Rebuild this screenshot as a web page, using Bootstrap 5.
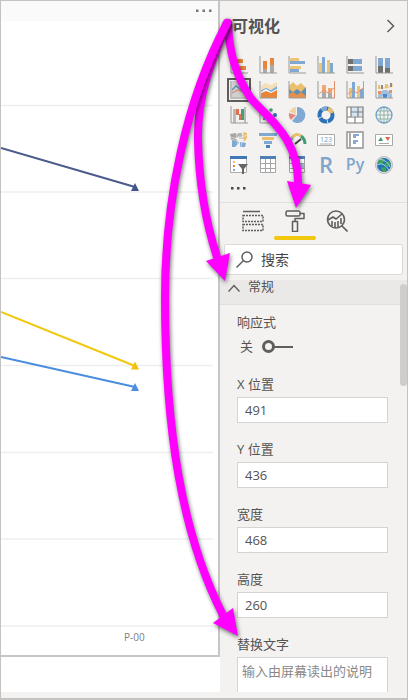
<!DOCTYPE html>
<html lang="zh-CN">
<head>
<meta charset="utf-8">
<meta name="viewport" content="width=device-width, initial-scale=1">
<title>可视化</title>
<link href="https://cdn.jsdelivr.net/npm/bootstrap@5.3.0/dist/css/bootstrap.min.css" rel="stylesheet">
<style>
body{font-family:"Open Sans","Noto Sans CJK SC",sans-serif;font-size:13px;line-height:18px;color:#555352;background:#f3f2f1}
.app{border:1px solid #c3c2c1;border-bottom-width:2px;padding-bottom:6px}
.canvas{background:#fff;min-width:0}
.visual{border-right:2px solid #c8c6c4;border-bottom:2px solid #c8c6c4}
.visual-head{background:#fafafa;height:20px;padding:0 6px}
.chart{height:634px}
.pane{width:187px;flex:none}
.pane-title{font-size:16px;line-height:24px;font-weight:700;color:#555352}
.pane-head{padding:13px 12px 18px 12px}
.plain{border:0;background:none;padding:0;color:inherit}
.viz{display:grid;grid-template-columns:repeat(6,18px);gap:7px 11px;padding-left:10px}
.viz button,.viz svg{width:18px;height:18px;display:block}
.viz svg{overflow:visible}
.viz .chosen{background:#d2d0ce;outline:2px solid #605e5c;outline-offset:1px}
.more{height:28px;padding:0 0 0 10px}
.tabs{border-top:1px solid #e1dfdd;padding-left:12px}
.tabs button{width:42px;padding:7px 0 4px;border-bottom:4px solid transparent}
.tabs .on{border-bottom:0}
.tabs .on::after{content:"";display:block;height:4px;border-radius:2px;background:#f2c80f;margin-top:4px;margin-bottom:-4px}
.find{margin:4px 4px 5px;height:31px;background:#fff;border:1px solid #dddbd9;border-radius:2px;padding:0 11px}
.find input{font-size:14px;color:#484644;min-width:0}
.find input::placeholder{color:#484644;opacity:1}
.props{background:#f3f2f1;position:relative}
.sect{background:#ebe9e8;border:0;border-bottom:1px solid #e1dfdd;color:#555352;line-height:12px;padding:0 8px 12px}
.fields{padding:8px 19px 0 17px;gap:17px}
.box{height:26px;border:1px solid #d6d4d2;background:#fff;font-size:13px;color:#555352;padding:0 7px;width:100%}
.note{height:35px;border:1px solid #d6d4d2;border-bottom:0;background:#fff;font-size:13px;padding:4px 4px;width:100%;resize:none;overflow:hidden;display:block}
.note::placeholder{color:#8a8886;opacity:1}
.field-label{display:block;margin-bottom:4px}
.switch-row{padding-left:3px;margin-top:6px;margin-bottom:3px;gap:9px}
.switch{appearance:none;width:31px;height:13px;margin:0;background:linear-gradient(#605e5c,#605e5c) 12px 6px/20px 2px no-repeat}
.switch::before{content:"";display:block;width:13px;height:13px;border:3px solid #605e5c;border-radius:50%}
.bar{position:absolute;right:0;top:4px;width:7px;height:102px;border-radius:4px;background:#cfcdcc}
.arrows{position:absolute;left:0;top:0;pointer-events:none}
.arrows g{filter:drop-shadow(1px 2px 2px rgba(0,0,0,.55))}
</style>
<script src="https://cdn.jsdelivr.net/npm/bootstrap@5.3.0/dist/js/bootstrap.bundle.min.js"></script>
</head>
<body>
<div class="app d-flex min-vh-100 position-relative">
  <main class="canvas flex-grow-1">
    <section class="visual">
      <div class="visual-head d-flex justify-content-end align-items-center">
        <button class="plain d-flex" aria-label="更多选项"><svg width="16" height="4" fill="#777"><path d="M0 .5h2.500v2.500H0zM6.500 .5h2.500v2.500H6.500zM13 .5h2.500v2.500H13z"/></svg></button>
      </div>
      <svg class="chart d-block w-100" viewBox="1 21 217 634" preserveAspectRatio="xMaxYMin slice">
        <path d="M1 105.500H213M1 192H213M1 278.500H213M1 365.500H213M1 452.500H213M1 539H213M1 626H213" stroke="#eeeeee" stroke-width="1.300" fill="none"/>
        <g fill="none" stroke-width="2"><path stroke="#4a5b8c" d="M1 148L135 187"/><path stroke="#f2c80f" d="M1 312L135 366"/><path stroke="#4a8ddc" d="M1 357L135 387"/></g>
        <path fill="#41558a" d="M131 191l4-8 4 8z"/><path fill="#efc20c" d="M131 369.500l4-8 4 8z"/><path fill="#4a8ddc" d="M131 391l4-8 4 8z"/>
        <text x="124" y="641" font-size="10" fill="#808080">P-00</text>
      </svg>
    </section>
  </main>

  <aside class="pane d-flex flex-column">
    <header class="pane-head d-flex justify-content-between align-items-center">
      <h1 class="pane-title m-0">可视化</h1>
      <button class="plain d-flex" aria-label="折叠"><svg width="9" height="14" fill="none" stroke="#605e5c" stroke-width="1.500"><path d="M1.500 1l6 6-6 6"/></svg></button>
    </header>

    <div class="viz">
      <button class="plain" aria-label="堆积条形图"><svg viewBox="0 0 18 18"><path fill="#e8853a" d="M2 3h11v4H2zM2 10h14v4H2z"/><path fill="#aaa" d="M2 3h4v4H2zM2 10h6v4H2z"/><path d="M1 0v17h17" fill="none" stroke="#999"/></svg></button>
      <button class="plain" aria-label="堆积柱形图"><svg viewBox="0 0 18 18"><path fill="#e8853a" d="M4 5h4v8H4zM11 2h4v7h-4z"/><path fill="#aaa" d="M4 13h4v4H4zM11 9h4v8h-4z"/><path d="M1 0v17h17" fill="none" stroke="#999"/></svg></button>
      <button class="plain" aria-label="簇状条形图"><svg viewBox="0 0 18 18"><path fill="#ebc477" d="M2 2h9v3H2zM2 10h11v3H2z"/><path fill="#7fa9d3" d="M2 5h15v3H2zM2 13h9v3H2z"/><path d="M1 0v17h17" fill="none" stroke="#999"/></svg></button>
      <button class="plain" aria-label="簇状柱形图"><svg viewBox="0 0 18 18"><path fill="#ebc477" d="M2 7h3v10H2zM10 4h3v13h-3z"/><path fill="#7fa9d3" d="M5 1h3v16H5zM13 7h3v10h-3z"/><path d="M1 0v17h17" fill="none" stroke="#999"/></svg></button>
      <button class="plain" aria-label="百分比条形图"><svg viewBox="0 0 18 18"><path fill="#7fa9d3" d="M6 3h10v5H6zM6 10h10v5H6z"/><path fill="#707070" d="M2 3h5v5H2zM2 10h5v5H2z"/><path d="M1 0v17h17" fill="none" stroke="#999"/></svg></button>
      <button class="plain" aria-label="百分比柱形图"><svg viewBox="0 0 18 18"><path fill="#7fa9d3" d="M3 2h5v9H3zM10 2h5v10h-5z"/><path fill="#707070" d="M3 10h5v7H3zM10 12h5v5h-5z"/><path d="M1 0v17h17" fill="none" stroke="#999"/></svg></button>

      <button class="plain chosen" aria-label="折线图"><svg viewBox="0 0 18 18" fill="none"><path d="M1 0v17h17" stroke="#aaa"/><path stroke="#d98a70" stroke-width="1.200" d="M2 12l6-3 5 2 5-5"/><path stroke="#5f8fc1" stroke-width="1.400" d="M2 9l4-4 7 5 5 1"/></svg></button>
      <button class="plain" aria-label="分区图"><svg viewBox="0 0 18 18"><path fill="#f6dfb8" d="M2 5l4-3 6 2 6-3v7H2z"/><path fill="#7fb1d4" d="M2 9l5-2 5 2 6-4v6H2z"/><path fill="#fff" d="M2 11l5-3 5 3 6-3v4H2z"/><path fill="#e8853a" d="M2 12l5-2 5 2 6-3v8H2z"/><path d="M1 0v17h17" fill="none" stroke="#999"/></svg></button>
      <button class="plain" aria-label="堆积面积图"><svg viewBox="0 0 18 18"><path fill="#ebbf6b" d="M1 5l4-4 4 4 4-3 5 5v8H1z"/><path fill="#5f8fb8" d="M1 8l4 3 4-3 4 3 5-5v11H1z"/><path fill="#e8904a" d="M1 13l4-2 4 3 4-3 5 4v2H1z"/><path d="M1 0v17h17" fill="none" stroke="#999"/></svg></button>
      <button class="plain" aria-label="折线和堆积柱形图"><svg viewBox="0 0 18 18"><path fill="#eda875" d="M5 4h4v7H5zM11 7h4v5h-4z"/><path fill="#aaa" d="M5 11h4v6H5zM11 12h4v5h-4z"/><path d="M1 0v17h17" fill="none" stroke="#999"/><path d="M17.500 0v17M2 13l5-4 4 3 6-5" fill="none" stroke="#e89068"/></svg></button>
      <button class="plain" aria-label="折线和簇状柱形图"><svg viewBox="0 0 18 18"><path fill="#ebc477" d="M3 7h3v10H3zM11 5h3v12h-3z"/><path fill="#7fa9d3" d="M6 1h3v16H6zM14 8h3v9h-3z"/><path d="M1 0v17h17" fill="none" stroke="#999"/><path d="M17.500 0v17M2 13l5-4 4 3 6-5" fill="none" stroke="#e89068"/></svg></button>
      <button class="plain" aria-label="功能区图表"><svg viewBox="0 0 18 18"><path fill="#f4dcb0" d="M3 5q7 3 15-3v4Q9 9 3 8z"/><path fill="#7fa9d3" opacity=".7" d="M3 13l5-4h4l5 4v4h-3l-4-4-4 4H3z"/><path fill="#8c8c8c" d="M6 4h2v4H6zM15 2h2v4h-2z"/><path fill="#ebbf6b" d="M3 4h2v4H3zM10 3h3v4h-3z"/><path fill="#e89068" d="M3 10h3v3H3zM14 9h3v3h-3z"/><path fill="#4d8ac5" d="M8 13h4v4H8z"/><path d="M1 0v17h17" fill="none" stroke="#999"/></svg></button>

      <button class="plain" aria-label="瀑布图"><svg viewBox="0 0 18 18"><path fill="#bbb" d="M3 3h3v14H3zM14 1h2v16h-2z"/><path fill="#e27352" d="M6 3h3v6H6zM9 8h2v6H9z"/><path fill="#4b9b7a" d="M11 3h3v11h-3z"/><path d="M1 0v17h17" fill="none" stroke="#999"/></svg></button>
      <button class="plain" aria-label="散点图"><svg viewBox="0 0 18 18"><g fill="#2f72b8"><circle cx="5" cy="8" r="2"/><circle cx="16" cy="9" r="2"/><circle cx="5" cy="13" r="1"/></g><g fill="#449a72"><circle cx="12" cy="4" r="1.800"/><circle cx="9" cy="11" r="2"/></g><path d="M1 0v17h17" fill="none" stroke="#999"/></svg></button>
      <button class="plain" aria-label="饼图"><svg viewBox="0 0 18 18"><path fill="#7fa9d3" d="M9 1a8 8 0 1 1-5 14l5-6z"/><path fill="#e3897b" d="M8 9l-5 5a8 8 0 0 1-2-7z"/><path fill="#f2d3a0" d="M8 8L1.500 6A8 8 0 0 1 8 1z"/></svg></button>
      <button class="plain" aria-label="环形图"><svg viewBox="0 0 18 18" fill="none" stroke-width="4"><circle cx="9" cy="9" r="6.500" stroke="#2f72b8" stroke-dasharray="8 .8"/><path stroke="#ebbf6b" d="M11 3a6.500 6.500 0 0 1 4 4"/><path stroke="#7fa9d3" d="M5 4a6.500 6.500 0 0 1 5-1.500"/></svg></button>
      <button class="plain" aria-label="树状图"><svg viewBox="0 0 18 18" fill="#fff"><path fill="#fff" d="M1 1h16v16H1z"/><path fill="#d3e4f2" d="M5 1h12v9H5z"/><path d="M1 1h16v16H1zM5 1v10M1 11h16M12 1v10M5 6h12M9 11v6" fill="none" stroke="#808080" stroke-width="1.200"/></svg></button>
      <button class="plain" aria-label="地图"><svg viewBox="0 0 18 18" fill="none" stroke="#8fb5ac"><path d="M2 5h14M1 9h16M2 13h14M9 1v16"/><ellipse cx="9" cy="9" rx="4" ry="8"/><circle cx="9" cy="9" r="8" stroke="#6f9fc9" stroke-width="1.300"/></svg></button>

      <button class="plain" aria-label="着色地图"><svg viewBox="0 0 18 18"><path fill="#a5a5a5" d="M0 3l6-1 3 3-4 3H1z"/><path fill="#c5c5c5" d="M9 4h5v4H9z"/><path fill="#ebbf6b" d="M13 1l4 1v5l-3 4z"/><path fill="#7fa9d3" d="M2 9h5l2 3-4 4H2zM10 11l6 1-1 4h-5z"/><path fill="#b5b5b5" d="M1 8h6v2H2zM8 2h4v3H8z"/><path fill="none" stroke="#f3f2f1" stroke-width=".6" d="M0 6l8 2 9-4M6 1l2 16M13 1l-2 15"/></svg></button>
      <button class="plain" aria-label="漏斗图"><svg viewBox="0 0 18 18"><path fill="#7fa9d3" d="M0 2h18v3H0zM5 10h8v3H5z"/><path fill="#ebbf6b" d="M3 6h12v3H3z"/><path fill="#4d80b5" d="M7 14h4v3H7z"/></svg></button>
      <button class="plain" aria-label="仪表"><svg viewBox="0 0 18 18" fill="none" stroke-width="3"><path stroke="#7fa9d3" d="M2 13q0-4 3-7"/><path stroke="#ebbf6b" d="M4 7q4-6 9-2"/><path stroke="#449a72" d="M13 5q4 3 4 8"/><path stroke="#444" stroke-width="2" d="M7 13l6-5"/></svg></button>
      <button class="plain" aria-label="卡片"><svg viewBox="0 0 18 18"><path fill="#fff" stroke="#aaa" d="M.5 3.500h17v11H.5z"/><text x="9" y="11" font-size="7" text-anchor="middle" fill="#6f9fc9">123</text><path stroke="#aaa" d="M3 13h12"/></svg></button>
      <button class="plain" aria-label="多行卡"><svg viewBox="0 0 18 18"><path fill="#fff" stroke="#909090" stroke-width="1.400" d="M1 1h16v16H1z"/><path stroke="#aaa" stroke-width="2" d="M4 1v16"/><path stroke="#5f8fc1" stroke-width="1.400" d="M7 4h6M7 6h3M7 10h5M7 12h3"/></svg></button>
      <button class="plain" aria-label="KPI"><svg viewBox="0 0 18 18"><path fill="#fff" stroke="#aaa" d="M.5 3.500h17v11H.5z"/><path fill="#449a72" d="M3 10l3-4 2 4z"/><path fill="#e06040" d="M10 6h5l-2 4z"/><path stroke="#aaa" d="M4 12.500h10"/></svg></button>

      <button class="plain" aria-label="切片器"><svg viewBox="0 0 18 18"><path fill="#fff" stroke="#aaa" d="M.5 1.500h16v15H.5z"/><path fill="#3e78b5" d="M0 0h17v3H0z"/><path fill="#ebbf6b" d="M3 5h2v2H3z"/><path fill="#e8853a" d="M3 9h2v2H3z"/><path fill="#7fa9d3" d="M3 13h2v2H3z"/><path fill="#666" d="M8 8h10l-4 5v5h-2v-5z"/></svg></button>
      <button class="plain" aria-label="表"><svg viewBox="0 0 18 18"><path fill="#fff" stroke="#a5a5a5" d="M1.500 1.500h15v15h-15zM6.500 2v14M11.500 2v14M2 7.500h15M2 12.500h15"/><path fill="#4d80b5" d="M1 0h16v3H1z"/></svg></button>
      <button class="plain" aria-label="矩阵"><svg viewBox="0 0 18 18"><path fill="#fff" stroke="#a5a5a5" d="M1.500 1.500h15v15h-15zM6.500 2v14M11.500 2v14M2 7.500h15M2 12.500h15"/><path fill="#4d80b5" d="M1 0h16v3H1z"/><path fill="#a9c6e0" d="M12 8h4v4h-4z"/></svg></button>
      <button class="plain" aria-label="R 视觉对象"><svg viewBox="0 0 18 18"><text x="9" y="17" font-size="22" font-weight="600" text-anchor="middle" fill="#7fa5cc">R</text></svg></button>
      <button class="plain" aria-label="Python 视觉对象"><svg viewBox="0 0 18 18"><text x="9" y="14" font-size="16" font-weight="600" text-anchor="middle" fill="#7fa5cc">Py</text></svg></button>
      <button class="plain" aria-label="ArcGIS 地图"><svg viewBox="0 0 18 18"><circle cx="9" cy="9" r="8.500" fill="#ddd" stroke="#bbb"/><circle cx="9" cy="9" r="7" fill="#2273b5"/><path fill="#41a35a" d="M3 5l4-3 3 2-3 4-3 1zM9 8l5-3 2 4-4 2zM6 12l4-1 2 4-4 1z"/><path stroke="#9fd0e8" fill="none" d="M2 9q6-4 12 5M5 3q8 2 10 8"/></svg></button>
    </div>
    <div class="more d-flex align-items-center"><button class="plain d-flex" aria-label="更多"><svg width="18" height="3" fill="#484644"><path d="M1 0h2.500v2.500H1zM7 0h2.500v2.500H7zM13 0h2.500v2.500H13z"/></svg></button></div>

    <nav class="tabs d-flex" aria-label="窗格">
      <button class="plain" aria-label="字段"><svg class="d-block mx-auto" width="22" height="22" fill="none" stroke="#605e5c" stroke-width="1.500"><path d="M1 1.500h17"/><path stroke-dasharray="2 1" d="M1 5.500h20v6H1zM1 14.500h20v6H1z"/></svg></button>
      <button class="plain on" aria-label="格式"><svg class="d-block mx-auto" width="22" height="22" fill="none" stroke="#605e5c" stroke-width="1.500" stroke-linejoin="round"><rect x="2" y="1" width="14" height="5" rx="1.500"/><path d="M16 3.500h4v5h-9v3M8.500 11.500h5v10h-5z"/></svg></button>
      <button class="plain" aria-label="分析"><svg class="d-block mx-auto" width="22" height="22" fill="none" stroke="#605e5c" stroke-width="1.600"><circle cx="10" cy="9.500" r="8.500"/><path d="M15.500 15.500l6 6M2 10l5-3 3 2 6-5M6 11v5M9 12v6M12 11v6M15 8v6"/></svg></button>
    </nav>

    <label class="find d-flex align-items-center gap-2">
      <svg class="flex-shrink-0" width="17" height="17" fill="none" stroke="#605e5c" stroke-width="1.500"><circle cx="11" cy="6" r="5"/><path d="M7.500 9.500L.5 16.500"/></svg>
      <input class="plain w-100" type="text" placeholder="搜索" aria-label="搜索">
    </label>

    <section class="props flex-grow-1">
      <button class="sect w-100 d-flex gap-2" aria-expanded="true">
        <svg class="mt-1" width="12" height="8" fill="none" stroke="#605e5c" stroke-width="1.400"><path d="M.5 7.500L6 1.500l5.500 6"/></svg><span>常规</span>
      </button>
      <form class="fields d-flex flex-column">
        <div>
          <label for="resp">响应式</label>
          <div class="switch-row d-flex align-items-center"><span>关</span><input class="switch" type="checkbox" role="switch" id="resp"></div>
        </div>
        <div><label class="field-label" for="px">X 位置</label><input class="box d-block" id="px" value="491"></div>
        <div><label class="field-label" for="py">Y 位置</label><input class="box d-block" id="py" value="436"></div>
        <div><label class="field-label" for="pw">宽度</label><input class="box d-block" id="pw" value="468"></div>
        <div><label class="field-label" for="ph">高度</label><input class="box d-block" id="ph" value="260"></div>
        <div><label class="field-label" for="alt">替换文字</label><textarea class="note" id="alt" rows="1" placeholder="输入由屏幕读出的说明"></textarea></div>
      </form>
      <div class="bar"></div>
    </section>
  </aside>

  <svg class="arrows" width="407" height="698" viewBox="1 1 407 698" fill="none" stroke="#f0f" stroke-width="8" stroke-linecap="round" aria-hidden="true">
    <g><path d="M228 23C229 60 240 82 250 97C262 114 300 135 298 186"/><path fill="#f0f" stroke="none" d="M287 181l24 4-15 23z"/></g>
    <g><path d="M227 23C212 60 197 95 198 140C199 185 205 220 217 257"/><path fill="#f0f" stroke="none" d="M206 261l24-8-5 28z"/></g>
    <g><path d="M227 23C186 100 165 200 165 297C165 430 182 535 223 615"/><path fill="#f0f" stroke="none" d="M213 623l20-15 5 28z"/></g>
  </svg>
</div>
</body>
</html>
